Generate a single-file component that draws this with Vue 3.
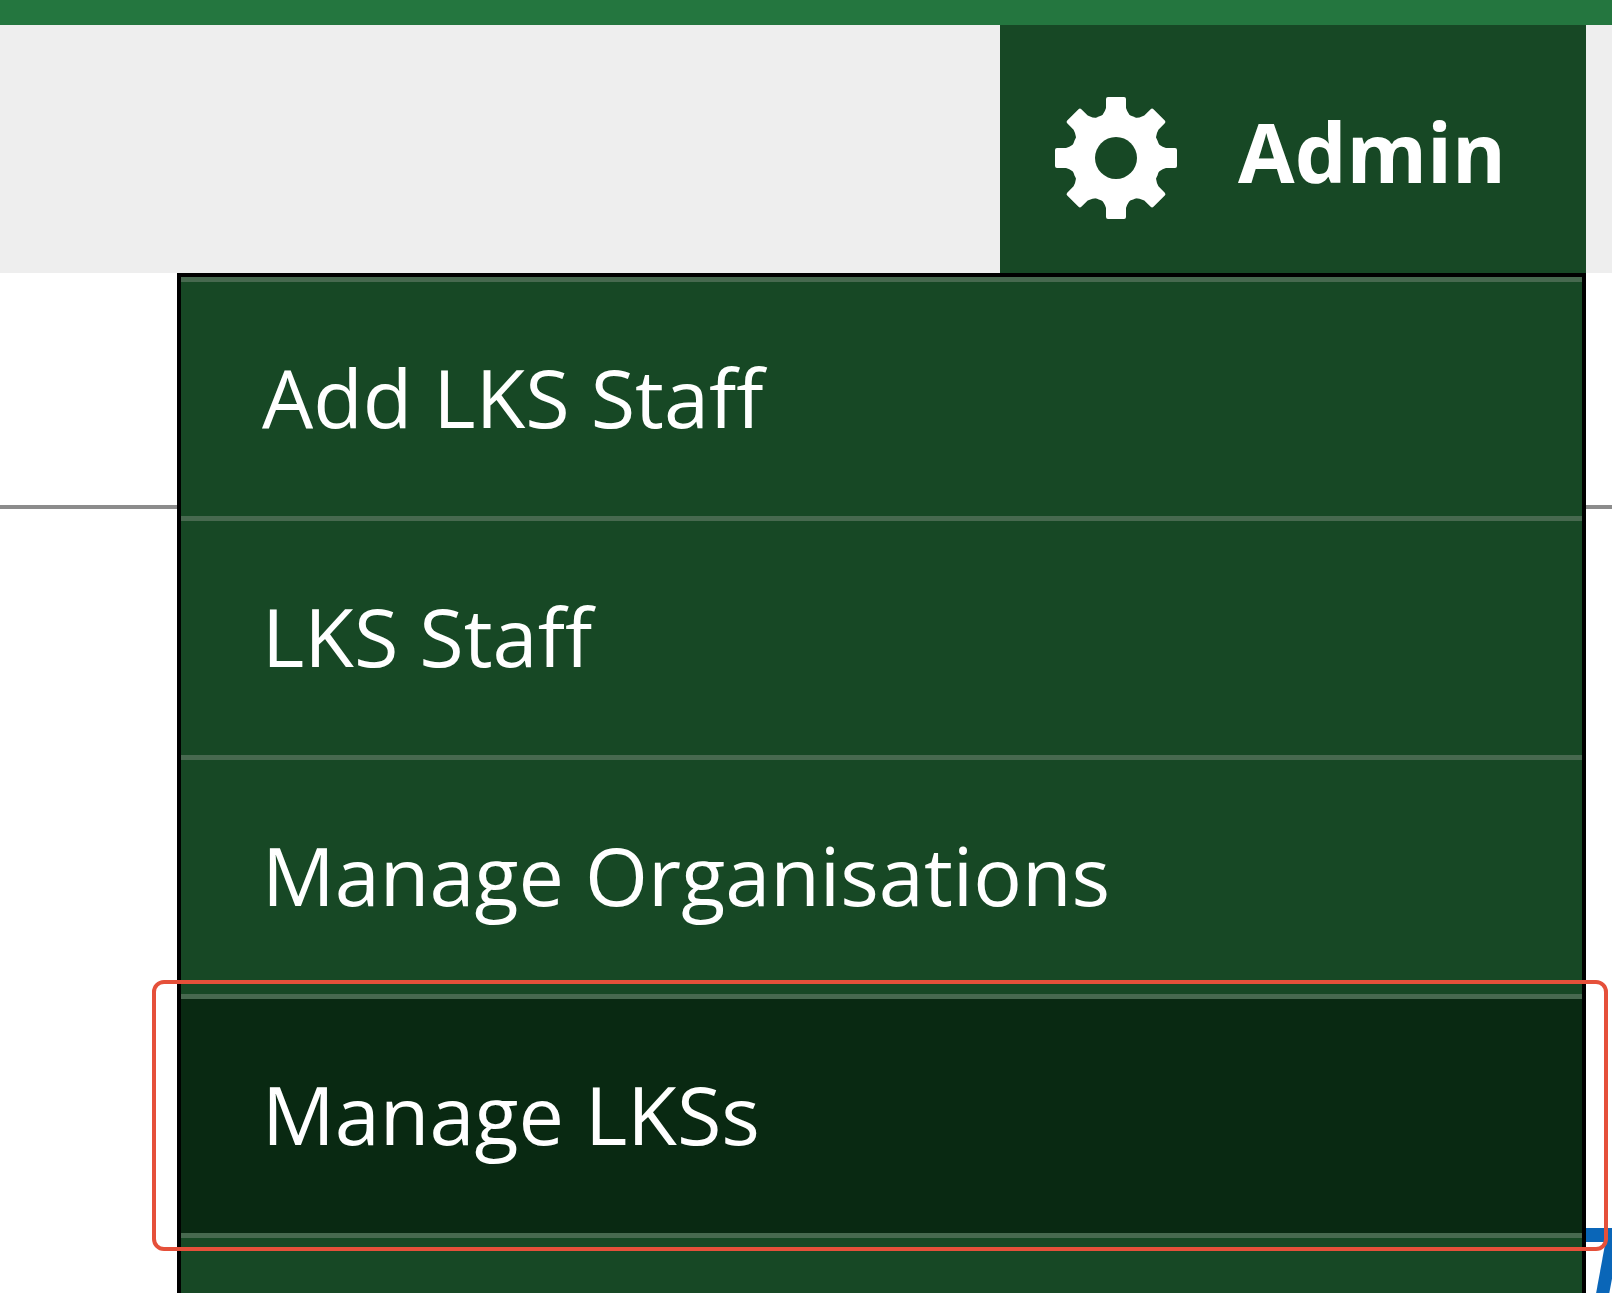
<script setup>
const items = [
  { label: 'Add LKS Staff' },
  { label: 'LKS Staff' },
  { label: 'Manage Organisations' },
  { label: 'Manage LKSs', current: true },
]
</script>

<template>
  <div class="page">
    <header class="bar">
      <nav class="admin">
        <button type="button" class="toggle" aria-expanded="true">
          <svg class="gear" viewBox="-62 -62 124 124" aria-hidden="true">
            <defs>
              <mask id="hub">
                <rect x="-62" y="-62" width="124" height="124" fill="#fff" />
                <circle r="21" fill="#000" />
              </mask>
            </defs>
            <g mask="url(#hub)" fill="#fff">
              <circle r="45" />
              <path
                v-for="n in 8"
                :key="n"
                :transform="`rotate(${n * 45})`"
                d="M-19 -38Q-12 -43 -10 -50V-59Q-10 -61 -8 -61H8Q10 -61 10 -59V-50Q12 -43 19 -38Z"
              />
            </g>
          </svg>
          <span>Admin</span>
        </button>
        <ul class="menu">
          <li v-for="item in items" :key="item.label" :class="{ current: item.current }">
            <a href="#">{{ item.label }}</a>
          </li>
          <li class="tail"></li>
        </ul>
      </nav>
    </header>
    <main class="content">
      <hr />
      <svg class="mark" viewBox="0 0 26 66" aria-hidden="true">
        <path d="M0 8H26" stroke="#0a66b8" stroke-width="14" />
        <path d="M27 10L16 70" stroke="#0a66b8" stroke-width="13" />
      </svg>
    </main>
  </div>
</template>

<style>
body {
  background: #fff;
}
html {
  overflow: hidden;
}
</style>

<style scoped>
.page {
  height: 100vh;
  overflow: hidden;
  font-family: "Open Sans", "Noto Sans", sans-serif;
}
.bar {
  display: flex;
  justify-content: flex-end;
  box-sizing: border-box;
  height: 273px;
  padding-right: 26px;
  border-top: 25px solid #24763f;
  background: #eee;
}
.admin {
  position: relative;
  display: flex;
}
.toggle {
  display: flex;
  align-items: center;
  gap: 60px;
  padding: 4px 80px 0 54px;
  border: 0;
  background: #174825;
  color: #fff;
  font: bold 82px/120px "Open Sans", "Noto Sans", sans-serif;
}
.gear {
  width: 124px;
  height: 124px;
  margin-top: 14px;
}
.menu {
  position: absolute;
  top: 100%;
  right: 0;
  z-index: 1;
  box-sizing: border-box;
  width: 1409px;
  margin: 0;
  padding: 0;
  border: 4px solid #000;
  background: #174825;
  list-style: none;
}
.menu li {
  position: relative;
  box-sizing: border-box;
  height: 239px;
  border-top: 5px solid #47694f;
}
.menu a {
  display: block;
  padding: 0 81px;
  color: #fff;
  font-size: 81px;
  line-height: 230px;
  text-decoration: none;
}
.menu .current {
  background: #092912;
}
.current::after {
  content: "";
  position: absolute;
  inset: -19px -26px -18px -29px;
  z-index: 2;
  border: 4px solid #e5503a;
  border-radius: 12px;
}
.content {
  display: flex;
  flex-direction: column;
  align-items: flex-end;
}
hr {
  width: 100%;
  height: 4px;
  margin: 232px 0 0;
  border: 0;
  background: #8c8c8c;
}
.mark {
  width: 26px;
  height: 66px;
  margin-top: 718px;
}
</style>
